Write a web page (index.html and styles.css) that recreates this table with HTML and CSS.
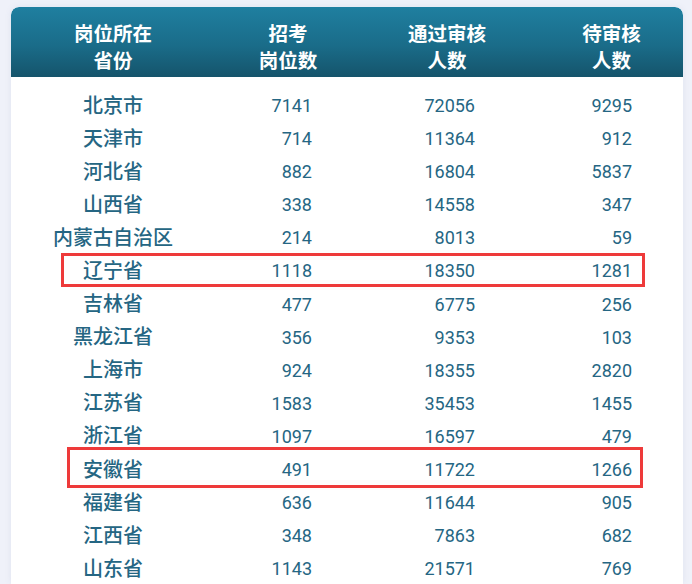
FILE: index.html
```html
<!DOCTYPE html>
<html lang="zh-CN">
<head>
<meta charset="utf-8">
<title>岗位表</title>
<link rel="stylesheet" href="styles.css">
</head>
<body>
<div class="card">
  <div class="head">
    <div class="hc c1">岗位所在<br>省份</div>
    <div class="hc c2">招考<br>岗位数</div>
    <div class="hc c3">通过审核<br>人数</div>
    <div class="hc c4">待审核<br>人数</div>
  </div>
  <div class="body">
    <div class="row"><div class="p">北京市</div><div class="n n2">7141</div><div class="n n3">72056</div><div class="n n4">9295</div></div>
    <div class="row"><div class="p">天津市</div><div class="n n2">714</div><div class="n n3">11364</div><div class="n n4">912</div></div>
    <div class="row"><div class="p">河北省</div><div class="n n2">882</div><div class="n n3">16804</div><div class="n n4">5837</div></div>
    <div class="row"><div class="p">山西省</div><div class="n n2">338</div><div class="n n3">14558</div><div class="n n4">347</div></div>
    <div class="row"><div class="p">内蒙古自治区</div><div class="n n2">214</div><div class="n n3">8013</div><div class="n n4">59</div></div>
    <div class="row"><div class="p">辽宁省</div><div class="n n2">1118</div><div class="n n3">18350</div><div class="n n4">1281</div></div>
    <div class="row"><div class="p">吉林省</div><div class="n n2">477</div><div class="n n3">6775</div><div class="n n4">256</div></div>
    <div class="row"><div class="p">黑龙江省</div><div class="n n2">356</div><div class="n n3">9353</div><div class="n n4">103</div></div>
    <div class="row"><div class="p">上海市</div><div class="n n2">924</div><div class="n n3">18355</div><div class="n n4">2820</div></div>
    <div class="row"><div class="p">江苏省</div><div class="n n2">1583</div><div class="n n3">35453</div><div class="n n4">1455</div></div>
    <div class="row"><div class="p">浙江省</div><div class="n n2">1097</div><div class="n n3">16597</div><div class="n n4">479</div></div>
    <div class="row"><div class="p">安徽省</div><div class="n n2">491</div><div class="n n3">11722</div><div class="n n4">1266</div></div>
    <div class="row"><div class="p">福建省</div><div class="n n2">636</div><div class="n n3">11644</div><div class="n n4">905</div></div>
    <div class="row"><div class="p">江西省</div><div class="n n2">348</div><div class="n n3">7863</div><div class="n n4">682</div></div>
    <div class="row"><div class="p">山东省</div><div class="n n2">1143</div><div class="n n3">21571</div><div class="n n4">769</div></div>
  </div>
  <div class="mark mark-ln"></div>
  <div class="mark mark-ah"></div>
</div>
</body>
</html>
```
FILE: styles.css
```css
html, body {
  margin: 0;
  padding: 0;
}
body {
  background: #eff1f9;
  width: 692px;
  height: 584px;
  overflow: hidden;
  font-family: Roboto, "Noto Sans CJK SC", sans-serif;
}
.card {
  position: relative;
  margin: 7px 0 0 11px;
  width: 672px;
  height: 577px;
  overflow: hidden;
  background: #ffffff;
  border-radius: 8px 8px 0 0;
  box-shadow: 0 0 6px rgba(120, 130, 170, 0.12);
}
.head {
  display: grid;
  grid-template-columns: 204px 146px 172px 150px;
  height: 70px;
  box-sizing: border-box;
  padding-top: 12px;
  border-radius: 8px 8px 0 0;
  background: linear-gradient(180deg, #1f7fa0 0%, #1a6c89 55%, #15546b 100%);
  color: #ffffff;
}
.hc {
  font-family: "Noto Sans CJK SC", sans-serif;
  font-weight: 700;
  font-size: 19.5px;
  line-height: 27px;
  text-align: center;
}
.hc.c4 {
  padding-left: 7px;
}
.body {
  padding-top: 9px;
}
.row {
  display: grid;
  grid-template-columns: 204px 146px 172px 150px;
  height: 33.1px;
  align-items: center;
  color: #256683;
}
.p {
  font-family: "Noto Sans CJK SC", sans-serif;
  font-weight: 500;
  font-size: 20px;
  line-height: 33px;
  text-align: center;
}
.n {
  font-family: Roboto, sans-serif;
  font-size: 18px;
  line-height: 33px;
  text-align: right;
  padding-top: 3px;
}
.n2 { padding-right: 49px; }
.n3 { padding-right: 58px; }
.n4 { padding-right: 51px; }
.mark {
  position: absolute;
  border: 3px solid #ee3a3a;
  box-sizing: border-box;
}
.mark-ln {
  left: 50px;
  top: 246px;
  width: 584px;
  height: 34px;
}
.mark-ah {
  left: 56px;
  top: 440px;
  width: 576px;
  height: 41px;
}
```
